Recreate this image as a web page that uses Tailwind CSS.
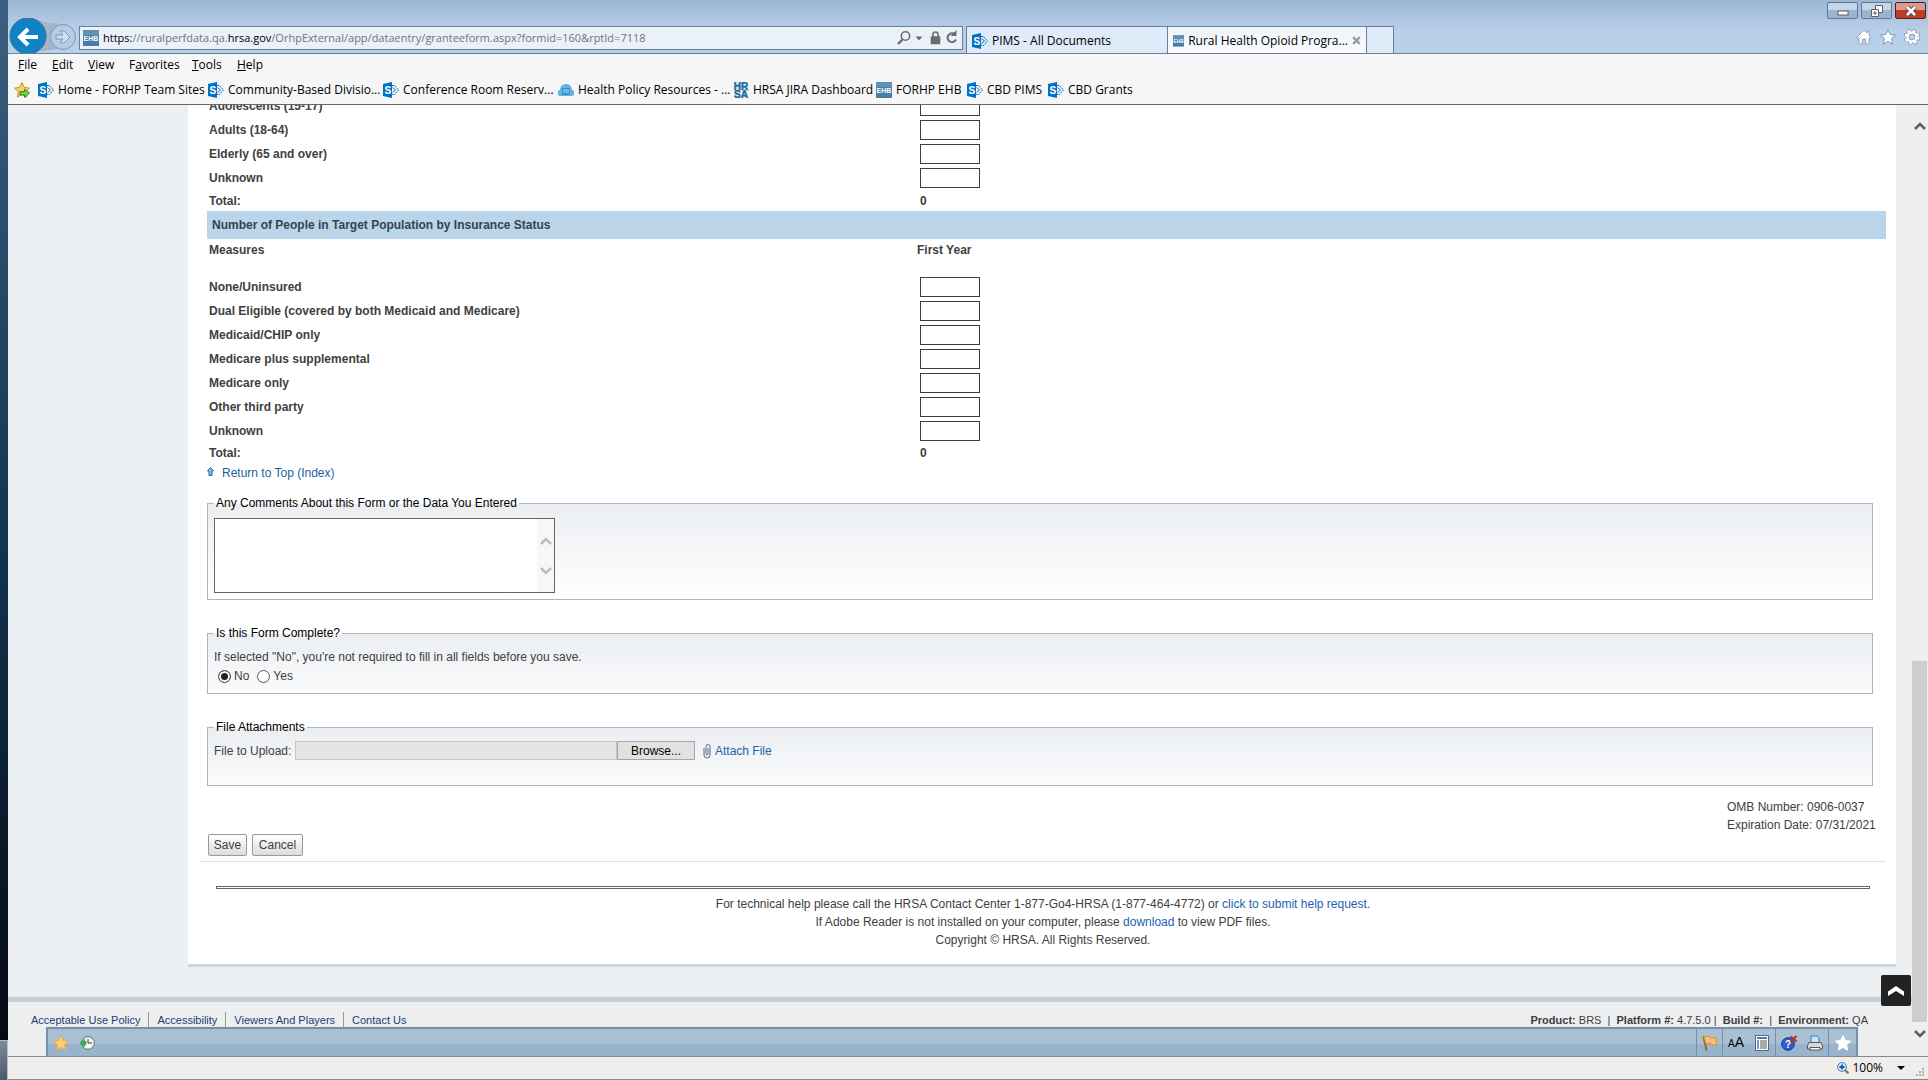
<!DOCTYPE html>
<html lang="en">
<head>
  <meta charset="UTF-8">
  <meta name="viewport" content="width=device-width, initial-scale=1.0">
  <title>Rural Health Opioid Program</title>
  <script src="https://cdn.jsdelivr.net/npm/@tailwindcss/browser@4"></script>
</head>

<body class="h-screen flex overflow-hidden bg-[#edf0f3] font-['Liberation_Sans',Arial,sans-serif] text-xs text-[#404040]">

  <!-- Shared icons -->
  <svg class="hidden">
    <symbol id="sharepoint" viewBox="0 0 16 16">
      <path d="M9 3.500h2.500L15.500 8l-4 4.500H9" fill="none" stroke="#0072c6" stroke-dasharray="2 .7"/>
      <path d="M9.500 5.500L12.500 8l-3 2.500" fill="none" stroke="#0072c6"/>
      <path d="M0 2L9 0v16l-9-2z" fill="#0072c6"/>
      <text x="1.500" y="11.500" font-size="10" font-weight="bold" fill="#fff" font-family="Liberation Sans">S</text>
    </symbol>
    <symbol id="ehb" viewBox="0 0 16 16">
      <rect width="16" height="16" fill="#457fa5"/>
      <rect width="16" height="5" fill="#5e93b5"/>
      <text x="8" y="11" font-size="7" font-weight="bold" text-anchor="middle" fill="#fff" font-family="Liberation Sans">EHB</text>
    </symbol>
    <symbol id="star" viewBox="0 0 16 16">
      <path d="M8 .6l2.300 4.900 5.200.6-3.900 3.600 1.100 5.400L8 12.400l-4.700 2.700 1.100-5.400L.5 6.100l5.200-.6z"/>
    </symbol>
    <symbol id="chevron" viewBox="0 0 12 8">
      <path d="M1 7l5-5 5 5" fill="none" stroke="currentColor" stroke-width="2.500"/>
    </symbol>
  </svg>

  <!-- Desktop behind the window -->
  <div class="w-2 shrink-0 flex flex-col justify-end bg-linear-to-b from-[#3d5f80] via-[#123452] to-[#04070d]">
    <div class="h-10 border-t border-r border-[#b4bcc4] bg-linear-to-b from-[#7d8b99] to-[#4b5968]"></div>
  </div>

  <div class="flex-1 min-w-0 flex flex-col">

    <!-- Title bar, address bar and tabs -->
    <header class="relative h-[54px] shrink-0 flex items-end border-b border-[#6b7f99] bg-linear-to-b from-[#9db7d3] to-[#b9d0ea] to-60% font-['Open_Sans','Noto_Sans',sans-serif] text-black">
      <svg class="w-[71px] h-[35px] shrink-0" viewBox="0 0 71 35">
        <path d="M24 0Q38 6 50 5L50 31 24 34z" fill="#a3b5c9"/>
        <circle cx="55" cy="19" r="12.500" fill="#b6cbe4" stroke="#8194b4"/>
        <path d="M48 17h7l-3-4h4l6 6-6 6h-4l3-4h-7z" fill="#cfdef0" stroke="#8194b4"/>
        <circle cx="20" cy="18" r="18" fill="#0f83c4" stroke="#40698f"/>
        <path d="M30 19H13M20 11l-8 8 8 8" fill="none" stroke="#fff" stroke-width="4"/>
      </svg>
      <div class="w-[884px] h-6 mb-[3px] px-[3px] flex items-center gap-1 border border-[#6b7f99] bg-[#ebf1fa]">
        <svg class="w-4 h-4 shrink-0"><use href="#ehb"/></svg>
        <label for="address" class="sr-only">Address</label>
        <div class="relative flex-1 h-full">
          <input id="address" class="absolute inset-0 w-full">
          <div class="h-full pt-px flex items-center text-[11px] text-[#747474]"><span class="text-black">https:</span>//ruralperfdata.qa.<span class="text-black">hrsa.gov</span>/OrhpExternal/app/dataentry/granteeform.aspx?formid=160&amp;rptId=7118</div>
        </div>
        <svg class="w-[62px] h-4 shrink-0 text-[#6d6d6d]" viewBox="0 0 62 16" fill="none" stroke="currentColor" stroke-width="1.600">
          <circle cx="8.500" cy="6" r="4.200"/><path d="M5.500 9.500L1 14" stroke-width="2.400"/>
          <path d="M18.500 6.500h7L22 10.500z" fill="currentColor" stroke="none"/>
          <path d="M34.500 7h8v6.500h-8z" fill="currentColor"/><path d="M36 7V4.500a2.500 2.500 0 015 0V7"/>
          <path d="M58 4.500A4.400 4.400 0 1059 9.500" stroke-width="2"/><path d="M59.500 0v6h-6z" fill="currentColor" stroke="none"/>
        </svg>
      </div>
      <nav class="ml-[3px] flex h-[27px] border border-b-0 border-[#6b7f99]">
        <a href="#" class="w-[200px] pl-[5px] pt-px flex items-center gap-1 bg-[#dfebf9]">
          <svg class="w-4 h-4"><use href="#sharepoint"/></svg>PIMS - All Documents
        </a>
        <a href="#" class="w-[200px] px-[5px] pt-px flex items-center gap-1 border-x border-[#6b7f99] bg-linear-to-b from-[#eef4fb] to-[#fbfcfe]">
          <svg class="w-4 h-4"><use href="#ehb"/></svg><span class="flex-1 whitespace-nowrap">Rural Health Opioid Progra...</span>
          <svg class="w-[9px] h-[9px] shrink-0" viewBox="0 0 8 8"><path d="M1 1l6 6M7 1L1 7" stroke="#999" stroke-width="2"/></svg>
        </a>
        <button class="w-[26px] bg-[#dfebf9]" aria-label="New tab"></button>
      </nav>
      <div class="absolute top-[2px] right-[2px] flex gap-[3px]">
        <button aria-label="Minimize" class="w-[31px] h-[17px] flex items-center justify-center rounded-xs border border-[#5d7896] bg-linear-to-b from-[#c5d6e8] from-50% to-[#9cb5cf] to-50%">
          <svg class="w-3 h-3" viewBox="0 0 12 12"><rect x="1" y="6" width="10" height="4" fill="#fff" stroke="#555f6d"/></svg>
        </button>
        <button aria-label="Restore" class="w-[31px] h-[17px] flex items-center justify-center rounded-xs border border-[#5d7896] bg-linear-to-b from-[#c5d6e8] from-50% to-[#9cb5cf] to-50%">
          <svg class="w-3 h-3" viewBox="0 0 12 12" fill="#fff" stroke="#555f6d"><path d="M4.500.5h7v7h-7z"/><path d="M.5 4.500h7v7h-7z"/><path d="M3 7h2v2H3z"/></svg>
        </button>
        <button aria-label="Close" class="w-[31px] h-[17px] flex items-center justify-center rounded-xs border border-[#521c1c] bg-linear-to-b from-[#dc9a8e] from-50% to-[#bd3c26] to-50%">
          <svg class="w-3 h-3" viewBox="0 0 12 12"><path d="M2 2l8 8M10 2l-8 8" stroke="#55414a" stroke-width="4.500"/><path d="M2 2l8 8M10 2l-8 8" stroke="#fff" stroke-width="2.600"/></svg>
        </button>
      </div>
      <div class="ml-auto mr-2 mb-2 flex gap-2 text-white">
        <svg class="w-4 h-4" viewBox="0 0 16 16" fill="#fff" stroke="#8294ab" stroke-width=".8"><path d="M8 1L.5 8.500l1.200 1L3 8.400V15h3.500v-5h3v5H13V8.400l1.300 1.100 1.200-1L13 6V2h-2v2z"/></svg>
        <svg class="w-4 h-4 fill-white stroke-[#8294ab]"><use href="#star"/></svg>
        <svg class="w-4 h-4" viewBox="0 0 16 16" fill="none"><circle cx="8" cy="8" r="6.500" stroke="#8294ab" stroke-width="3.400" stroke-dasharray="3 2.100"/><circle cx="8" cy="8" r="4.500" stroke="#8294ab" stroke-width="4"/><circle cx="8" cy="8" r="6.300" stroke="#fff" stroke-width="2.200" stroke-dasharray="2.500 2.450"/><circle cx="8" cy="8" r="4.500" stroke="#fff" stroke-width="2.600"/></svg>
      </div>
    </header>

    <!-- Menu and favorites -->
    <div class="h-[51px] shrink-0 border-b border-[#666] bg-[#f6f6f6] font-['Open_Sans','Noto_Sans',sans-serif] text-black">
      <nav class="h-[22px] pl-[10px] flex items-center">
        <a href="#" class="w-[34px]"><u>F</u>ile</a>
        <a href="#" class="w-9"><u>E</u>dit</a>
        <a href="#" class="w-[41px]"><u>V</u>iew</a>
        <a href="#" class="w-[63px]">F<u>a</u>vorites</a>
        <a href="#" class="w-[45px]"><u>T</u>ools</a>
        <a href="#"><u>H</u>elp</a>
      </nav>
      <nav class="h-7 pl-[6px] flex items-center whitespace-nowrap">
        <button class="w-6" aria-label="Add to favorites">
          <svg class="w-4 h-4" viewBox="0 0 16 16"><path d="M8 .6l2.300 4.900 5.200.6-3.900 3.600 1.100 5.400L8 12.400l-4.700 2.700 1.100-5.400L.5 6.100l5.200-.6z" fill="#fbd55a" stroke="#c6922b"/><path d="M6 9.500h4.500V7l5 4-5 4.500V13H6z" fill="#6fd04a" stroke="#2c8a26"/></svg>
        </button>
        <a href="#" class="w-[170px] flex items-center gap-1"><svg class="w-4 h-4"><use href="#sharepoint"/></svg>Home - FORHP Team Sites</a>
        <a href="#" class="w-[175px] flex items-center gap-1"><svg class="w-4 h-4"><use href="#sharepoint"/></svg>Community-Based Divisio...</a>
        <a href="#" class="w-[175px] flex items-center gap-1"><svg class="w-4 h-4"><use href="#sharepoint"/></svg>Conference Room Reserv...</a>
        <a href="#" class="w-[175px] flex items-center gap-1">
          <svg class="w-4 h-4" viewBox="0 0 16 16"><path d="M3 14a3 3 0 01-1-6c0-4 3-6 6-6s6 2 6 6a3 3 0 01-1 6z" fill="#64b5e2"/><path d="M4 6h8v7H4z" fill="#3d92cc"/><path d="M5 8h6M5 10h6" stroke="#a9d8f0"/></svg>Health Policy Resources - ...
        </a>
        <a href="#" class="w-[143px] flex items-center gap-1">
          <svg class="w-4 h-4" viewBox="0 0 16 16" font-family="Liberation Sans" font-size="10" font-weight="bold" fill="#1f6c9c" stroke="#1f6c9c" stroke-width=".5" text-anchor="middle"><text x="8" y="7.500">HR</text><text x="8" y="15.500">SA</text></svg>HRSA JIRA Dashboard
        </a>
        <a href="#" class="w-[91px] flex items-center gap-1"><svg class="w-4 h-4"><use href="#ehb"/></svg>FORHP EHB</a>
        <a href="#" class="w-[81px] flex items-center gap-1"><svg class="w-4 h-4"><use href="#sharepoint"/></svg>CBD PIMS</a>
        <a href="#" class="flex items-center gap-1"><svg class="w-4 h-4"><use href="#sharepoint"/></svg>CBD Grants</a>
      </nav>
    </div>

    <div class="relative flex-1 min-h-0 flex">
      <div class="flex-1 min-w-0 overflow-hidden">

        <!-- Form, scrolled near its end -->
        <main class="-mt-[11px] ml-[180px] mr-4 pl-[19px] pr-[10px] pb-[15px] border-b-3 border-[#d0d5d9] bg-white">
          <table class="w-full font-bold text-left">
            <tbody>
              <tr class="h-6"><td class="w-[713px] pl-[2px]"><label for="a1">Adolescents (15-17)</label></td><td><input id="a1" class="block w-[60px] h-5 border border-[#2f4247] bg-white"></td></tr>
              <tr class="h-6"><td class="pl-[2px]"><label for="a2">Adults (18-64)</label></td><td><input id="a2" class="block w-[60px] h-5 border border-[#2f4247] bg-white"></td></tr>
              <tr class="h-6"><td class="pl-[2px]"><label for="a3">Elderly (65 and over)</label></td><td><input id="a3" class="block w-[60px] h-5 border border-[#2f4247] bg-white"></td></tr>
              <tr class="h-6"><td class="pl-[2px]"><label for="a4">Unknown</label></td><td><input id="a4" class="block w-[60px] h-5 border border-[#2f4247] bg-white"></td></tr>
              <tr class="h-[21px]"><td class="pl-[2px]">Total:</td><td>0</td></tr>
            </tbody>
          </table>
          <h2 class="h-7 pl-[5px] flex items-center bg-[#bad4ea] font-bold text-[#2f4553]">Number of People in Target Population by Insurance Status</h2>
          <table class="w-full font-bold text-left">
            <thead>
              <tr class="h-9 align-top"><th class="w-[710px] pl-[2px] pt-[3px]">Measures</th><th class="pt-[3px]">First Year</th></tr>
            </thead>
            <tbody>
              <tr class="h-6"><td class="pl-[2px]"><label for="i1">None/Uninsured</label></td><td class="pl-[3px]"><input id="i1" class="block w-[60px] h-5 border border-[#2f4247] bg-white"></td></tr>
              <tr class="h-6"><td class="pl-[2px]"><label for="i2">Dual Eligible (covered by both Medicaid and Medicare)</label></td><td class="pl-[3px]"><input id="i2" class="block w-[60px] h-5 border border-[#2f4247] bg-white"></td></tr>
              <tr class="h-6"><td class="pl-[2px]"><label for="i3">Medicaid/CHIP only</label></td><td class="pl-[3px]"><input id="i3" class="block w-[60px] h-5 border border-[#2f4247] bg-white"></td></tr>
              <tr class="h-6"><td class="pl-[2px]"><label for="i4">Medicare plus supplemental</label></td><td class="pl-[3px]"><input id="i4" class="block w-[60px] h-5 border border-[#2f4247] bg-white"></td></tr>
              <tr class="h-6"><td class="pl-[2px]"><label for="i5">Medicare only</label></td><td class="pl-[3px]"><input id="i5" class="block w-[60px] h-5 border border-[#2f4247] bg-white"></td></tr>
              <tr class="h-6"><td class="pl-[2px]"><label for="i6">Other third party</label></td><td class="pl-[3px]"><input id="i6" class="block w-[60px] h-5 border border-[#2f4247] bg-white"></td></tr>
              <tr class="h-6"><td class="pl-[2px]"><label for="i7">Unknown</label></td><td class="pl-[3px]"><input id="i7" class="block w-[60px] h-5 border border-[#2f4247] bg-white"></td></tr>
              <tr class="h-5"><td class="pl-[2px]">Total:</td><td class="pl-[3px]">0</td></tr>
            </tbody>
          </table>
          <a href="#" class="h-5 flex items-center gap-2 text-[#1b5f9e]">
            <svg class="w-[7px] h-[9px] mb-[3px]" viewBox="0 0 7 9"><path d="M3.500.5l3 3.500H5v4.500H2V4H.5z" fill="#7cc6ea" stroke="#1b6a9e"/></svg>Return to Top (Index)
          </a>

          <fieldset class="mt-3 mr-[13px] px-[6px] pt-[7px] pb-[6px] border border-[#b4b4b4] bg-linear-to-b from-[#ebeef2] to-white">
            <legend class="px-[2px] text-black">Any Comments About this Form or the Data You Entered</legend>
            <div class="relative w-[341px]">
              <textarea aria-label="Any Comments About this Form or the Data You Entered" class="block w-full h-[75px] resize-none border border-[#666] bg-white"></textarea>
              <div class="absolute inset-y-px right-px w-[17px] flex flex-col items-center justify-center gap-[22px] bg-[#f7f7f7] text-[#bdbdbd]">
                <svg class="w-3 h-2"><use href="#chevron"/></svg>
                <svg class="w-3 h-2 rotate-180"><use href="#chevron"/></svg>
              </div>
            </div>
          </fieldset>

          <fieldset class="mt-[25px] mr-[13px] px-[6px] py-[7px] border border-[#b4b4b4] bg-linear-to-b from-[#ebeef2] to-[#fafbfc]">
            <legend class="px-[2px] text-black">Is this Form Complete?</legend>
            <p class="leading-[18px]">If selected "No", you're not required to fill in all fields before you save.</p>
            <div class="h-5 pl-1 flex items-center">
              <input type="radio" id="no" name="complete" checked class="w-[13px] h-[13px] mr-[3px] appearance-none rounded-full border border-[#555] bg-white checked:bg-[#222] checked:shadow-[inset_0_0_0_2px_white]">
              <label for="no" class="mr-2">No</label>
              <input type="radio" id="yes" name="complete" class="w-[13px] h-[13px] mr-[3px] appearance-none rounded-full border border-[#555] bg-white checked:bg-[#222] checked:shadow-[inset_0_0_0_2px_white]">
              <label for="yes">Yes</label>
            </div>
          </fieldset>

          <fieldset class="mt-[25px] mr-[13px] px-[6px] pt-[6px] pb-[25px] border border-[#b4b4b4] bg-linear-to-b from-[#ebeef2] to-[#fafbfc]">
            <legend class="px-[2px] text-black">File Attachments</legend>
            <div class="flex items-center">
              <label for="file" class="w-[81px]">File to Upload:</label>
              <input id="file" readonly class="w-[322px] h-[19px] border border-[#c6c6c6] bg-[#e5e5e5]">
              <button class="w-[78px] h-[19px] border border-[#a5a5a5] bg-[#e1e1e1] text-black">Browse...</button>
              <a href="#" class="ml-2 flex items-center gap-1 text-[#1b64ae]">
                <svg class="w-2 h-4" viewBox="0 0 8 16"><path d="M1 5v7a3 3 0 006 0V3.500a2 2 0 00-4 0V11a1 1 0 002 0V5" fill="none" stroke="#5b6b7c"/></svg>Attach File
              </a>
            </div>
          </fieldset>

          <div class="mt-3 flex justify-end leading-[18px]">
            <p class="w-[159px]">OMB Number: 0906-0037<br>Expiration Date: 07/31/2021</p>
          </div>
          <div class="pl-px pb-[5px] flex gap-[5px]">
            <button class="w-[39px] h-[22px] rounded-xs border border-[#999] bg-linear-to-b from-white to-[#dcdcdc]">Save</button>
            <button class="w-[51px] h-[22px] rounded-xs border border-[#999] bg-linear-to-b from-white to-[#dcdcdc]">Cancel</button>
          </div>
          <hr class="-ml-[7px] border-[#e0e0e0]">
          <div class="mt-6 ml-[9px] mr-4 h-[3px] border border-[#666] bg-white"></div>
          <footer class="mt-[6px] -ml-[7px] text-center leading-[18px]">
            <p>For technical help please call the HRSA Contact Center 1-877-Go4-HRSA (1-877-464-4772) or <a href="#" class="text-[#1b5fae]">click to submit help request.</a></p>
            <p>If Adobe Reader is not installed on your computer, please <a href="#" class="text-[#1b5fae]">download</a> to view PDF files.</p>
            <p>Copyright © HRSA. All Rights Reserved.</p>
          </footer>
        </main>

        <footer class="mt-[30px] h-16 pl-[15px] pr-11 pt-[10px] flex items-start justify-between border-t-5 border-[#c8ced6] bg-[#edeef0] text-[11px] leading-4">
          <nav class="flex text-[#1b3d70]">
            <a href="#" class="px-2">Acceptable Use Policy</a>
            <a href="#" class="px-2 border-l border-[#999]">Accessibility</a>
            <a href="#" class="px-2 border-l border-[#999]">Viewers And Players</a>
            <a href="#" class="px-2 border-l border-[#999]">Contact Us</a>
          </nav>
          <p class="whitespace-pre"><b>Product:</b> BRS  |  <b>Platform #:</b> 4.7.5.0 |  <b>Build #:</b>  |  <b>Environment:</b> QA</p>
        </footer>
      </div>

      <!-- Scrollbar -->
      <div class="w-4 shrink-0 flex flex-col items-center bg-[#efefef] text-[#606060]">
        <svg class="mt-[17px] w-3 h-2 shrink-0"><use href="#chevron"/></svg>
        <div class="flex-1"></div>
        <div class="w-full h-[38%] border-r border-[#efefef] bg-[#cdcdcd]"></div>
        <svg class="mt-2 mb-[18px] w-3 h-2 shrink-0 rotate-180"><use href="#chevron"/></svg>
      </div>

      <button aria-label="Back to top" class="absolute right-[17px] bottom-[50px] w-[30px] h-[31px] flex items-center justify-center rounded-xs bg-[#222] text-white">
        <svg class="w-4 h-[10px]" viewBox="0 0 16 10"><path d="M8 0l8 5.500V10L8 5 0 10V5.500z" fill="currentColor"/></svg>
      </button>

      <!-- Docked toolbar -->
      <div class="absolute left-[38px] right-[70px] bottom-0 h-[29px] flex items-stretch border-2 border-b-0 border-[#7590a8] bg-linear-to-b from-[#a9c0d2] from-55% to-[#98b4cd] to-55%">
        <div class="flex items-center gap-[10px] pl-[5px]">
          <svg class="w-4 h-4 fill-[#ffd071] stroke-[#e9a94c]"><use href="#star"/></svg>
          <svg class="w-4 h-4" viewBox="0 0 16 16"><circle cx="9" cy="8" r="6.300" fill="#f3f8f3" stroke="#5a6e62"/><path d="M9 4v4h4" fill="none" stroke="#333"/><path d="M5.500 4.500v2H7v3H5.500v2L1 8z" fill="#36b148" stroke="#1f8230" stroke-width=".6"/></svg>
        </div>
        <div class="ml-auto flex divide-x divide-[#7590a8]">
          <div class="w-[27px] flex items-center justify-center border-l border-[#7590a8]">
            <svg class="w-4 h-4" viewBox="0 0 16 16"><path d="M1.500 1.500l3 14" stroke="#8f6a35" stroke-width="2"/><path d="M2 2l5-1 1.500 2 6.500 0-1 3.500 1 3.500-5.500 0-1-2-4.500 1z" fill="#ffbf73" stroke="#d98a35"/></svg>
          </div>
          <div class="w-[53px] flex items-center justify-around">
            <span class="flex items-baseline text-black text-sm leading-4"><span class="text-[10px]">A</span>A</span>
            <svg class="w-4 h-4" viewBox="0 0 16 16"><path d="M1.500.5h13v15h-13z" fill="#fff" stroke="#51657c"/><path d="M3 2h10v2H3z" fill="#5177bb"/><path d="M3 5h2v9H3z" fill="#7b98c6"/><path d="M6 5h7v9H6z" fill="#aaa"/></svg>
          </div>
          <div class="w-[53px] flex items-center justify-around">
            <svg class="w-4 h-4" viewBox="0 0 16 16"><circle cx="7" cy="9" r="6.300" fill="#315cc9" stroke="#1b357f"/><text x="4" y="13" font-size="10" font-weight="bold" fill="#fff" font-family="Liberation Sans">?</text><path d="M9.500 1.500l6 5M15.500 1l-6 6" stroke="#c42727" stroke-width="2"/></svg>
            <svg class="w-4 h-4" viewBox="0 0 16 16"><path d="M4 8V1h6l2 2v5z" fill="#c9e3fb" stroke="#3979b6"/><path d="M2 7.500h12l1.500 3V14H.5v-3.500z" fill="#d8d8d8" stroke="#555"/><path d="M3 12.500h10v2.500H3z" fill="#fff" stroke="#555"/></svg>
          </div>
          <div class="w-[27px] flex items-center justify-center">
            <svg class="w-4 h-4 fill-white stroke-white"><use href="#star"/></svg>
          </div>
        </div>
      </div>
    </div>

    <!-- Status bar -->
    <div class="h-6 shrink-0 pr-1 flex items-center justify-end border-y border-[#888] bg-[#f0eeed] font-['Open_Sans','Noto_Sans',sans-serif] text-black">
      <svg class="w-3 h-3 mr-[3px]" viewBox="0 0 12 12"><path d="M8 8l3.500 3.500" stroke="#9b7a51" stroke-width="2.400"/><circle cx="5" cy="5" r="4.400" fill="#cfe8fa" stroke="#4d7fae"/><path d="M5 2.500v5M2.500 5h5" stroke="#1259b5" stroke-width="1.800"/></svg>
      100%
      <svg class="ml-[14px] w-2 h-1" viewBox="0 0 8 4"><path d="M0 0h8L4 4z"/></svg>
      <svg class="ml-[10px] mt-2 w-[9px] h-[9px]" viewBox="0 0 9 9" fill="#b0b0b0"><path d="M7 0h2v2H7zM4 3h2v2H4zM7 3h2v2H7zM1 6h2v2H1zM4 6h2v2H4zM7 6h2v2H7z"/></svg>
    </div>
  </div>

</body>
</html>
